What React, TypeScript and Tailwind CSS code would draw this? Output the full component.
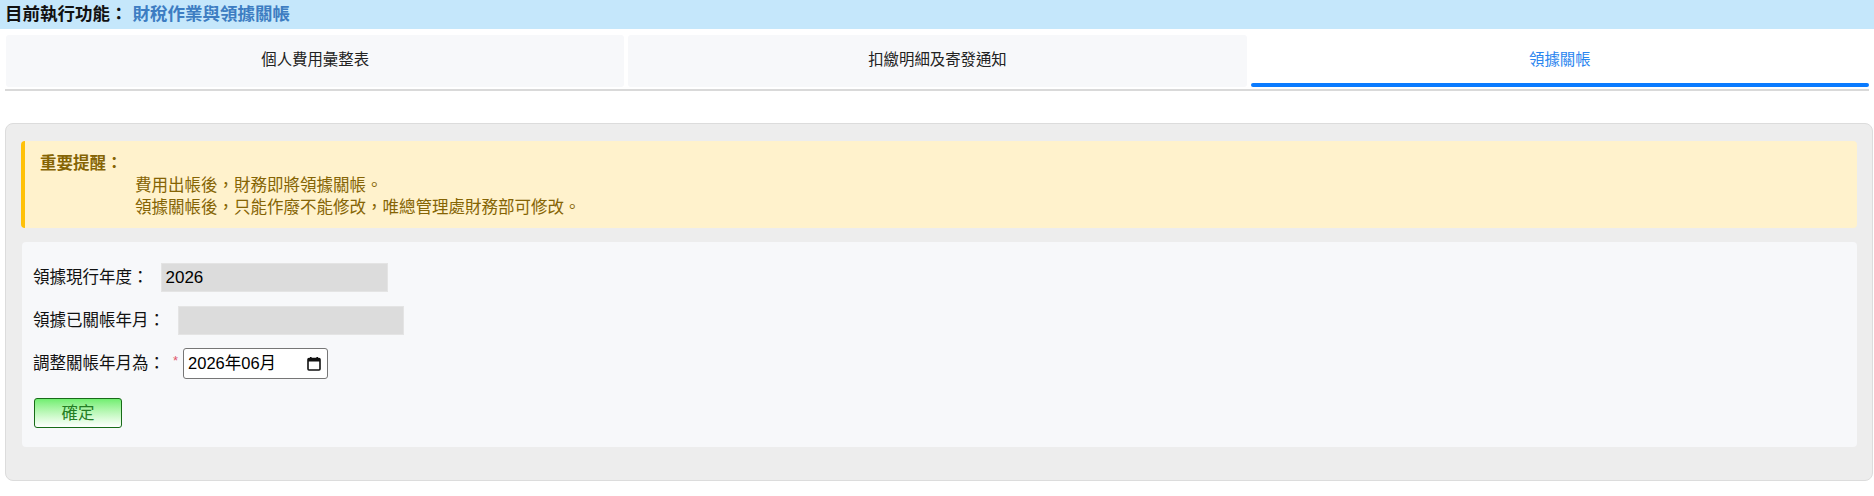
import React from "react";

const FONT = '"Liberation Sans", "Noto Sans CJK TC", sans-serif';

function CalendarIcon() {
  return (
    <svg width="14" height="14" viewBox="0 0 14 14" className="block">
      <rect x="1" y="1.5" width="12" height="11.5" rx="1" fill="none" stroke="#111" strokeWidth="1.6" />
      <rect x="1" y="1.5" width="12" height="3" fill="#111" />
      <rect x="3" y="0" width="1.6" height="3" fill="#111" />
      <rect x="9.4" y="0" width="1.6" height="3" fill="#111" />
    </svg>
  );
}

export default function App() {
  const tabs = ["個人費用彙整表", "扣繳明細及寄發通知", "領據關帳"];
  return (
    <div className="w-[1874px] h-[496px] bg-white text-[#111]" style={{ fontFamily: FONT }}>
      {/* header */}
      <div className="h-[29px] bg-[#c5e7fb] flex items-center pl-[5px] text-[17.5px] font-bold leading-none">
        <span className="text-[#111]">目前執行功能：</span>
        <span className="ml-[5px] text-[#3d7dc2]">財稅作業與領據關帳</span>
      </div>

      {/* tabs */}
      <div className="mx-[5px] mt-[6px] border-b-2 border-[#d9d9d9] pb-[2px]">
        <div className="grid grid-cols-3 gap-[4px] pl-[1px]">
          {tabs.map((t, i) => {
            const active = i === 2;
            return (
              <div
                key={t}
                className={
                  active
                    ? "relative h-[52px] flex items-center justify-center rounded-[3px] bg-white text-[15.4px] text-[#2a85ef]"
                    : "h-[52px] flex items-center justify-center rounded-[3px] bg-[#f7f8fa] text-[15.4px] text-[#222]"
                }
              >
                <span className="-mt-[3px]">{t}</span>
                {active && <div className="absolute left-0 right-0 bottom-0 h-[4px] rounded-[2px] bg-[#0a7bff]" />}
              </div>
            );
          })}
        </div>
      </div>

      {/* panel */}
      <div className="ml-[5px] mr-[1px] mt-[32px] h-[358px] rounded-[8px] border border-[#dcdcdc] bg-[#ededed] px-[15px] pt-[17px]">
        {/* warning */}
        <div className="h-[87px] rounded-[4px] border-l-4 border-[#ffc107] bg-[#fff2cc] pl-[15px] pt-[11px] text-[16.5px] leading-[22px] text-[#856404]">
          <div className="font-bold">重要提醒：</div>
          <div className="pl-[95px]">
            <div>費用出帳後，財務即將領據關帳。</div>
            <div>領據關帳後，只能作廢不能修改，唯總管理處財務部可修改。</div>
          </div>
        </div>

        {/* form */}
        <div className="mt-[14px] ml-[1px] h-[205px] rounded-[4px] bg-[#f7f8fa] pl-[11px] pt-[21px] text-[16.5px] text-[#111]">
          <div className="flex items-center h-[29px]">
            <span>領據現行年度：</span>
            <div className="ml-[12px] w-[227px] h-[29px] bg-[#dcdcdc] border border-[#e4e4e4] flex items-center pl-[4px] text-[17px] text-black">
              2026
            </div>
          </div>
          <div className="flex items-center h-[29px] mt-[14px]">
            <span>領據已關帳年月：</span>
            <div className="ml-[13px] w-[226px] h-[29px] bg-[#dcdcdc] border border-[#e4e4e4]" />
          </div>
          <div className="flex items-center h-[31px] mt-[13px]">
            <span>調整關帳年月為：</span>
            <span className="ml-[8px] -mt-[5px] text-[13px] text-[#e0566b]">*</span>
            <div className="ml-[5px] w-[145px] h-[31px] bg-white border border-[#767676] rounded-[3px] flex items-center pl-[4px] pr-[6px] text-black">
              <span className="flex-1">2026年06月</span>
              <CalendarIcon />
            </div>
          </div>
          <button
            type="button"
            className="mt-[19px] ml-[1px] w-[88px] h-[30px] rounded-[3px] border border-[#176b17] bg-gradient-to-b from-[#70ee70] to-white text-[16.5px] text-[#247d24] flex items-center justify-center"
            style={{ fontFamily: FONT }}
          >
            確定
          </button>
        </div>
      </div>
    </div>
  );
}
